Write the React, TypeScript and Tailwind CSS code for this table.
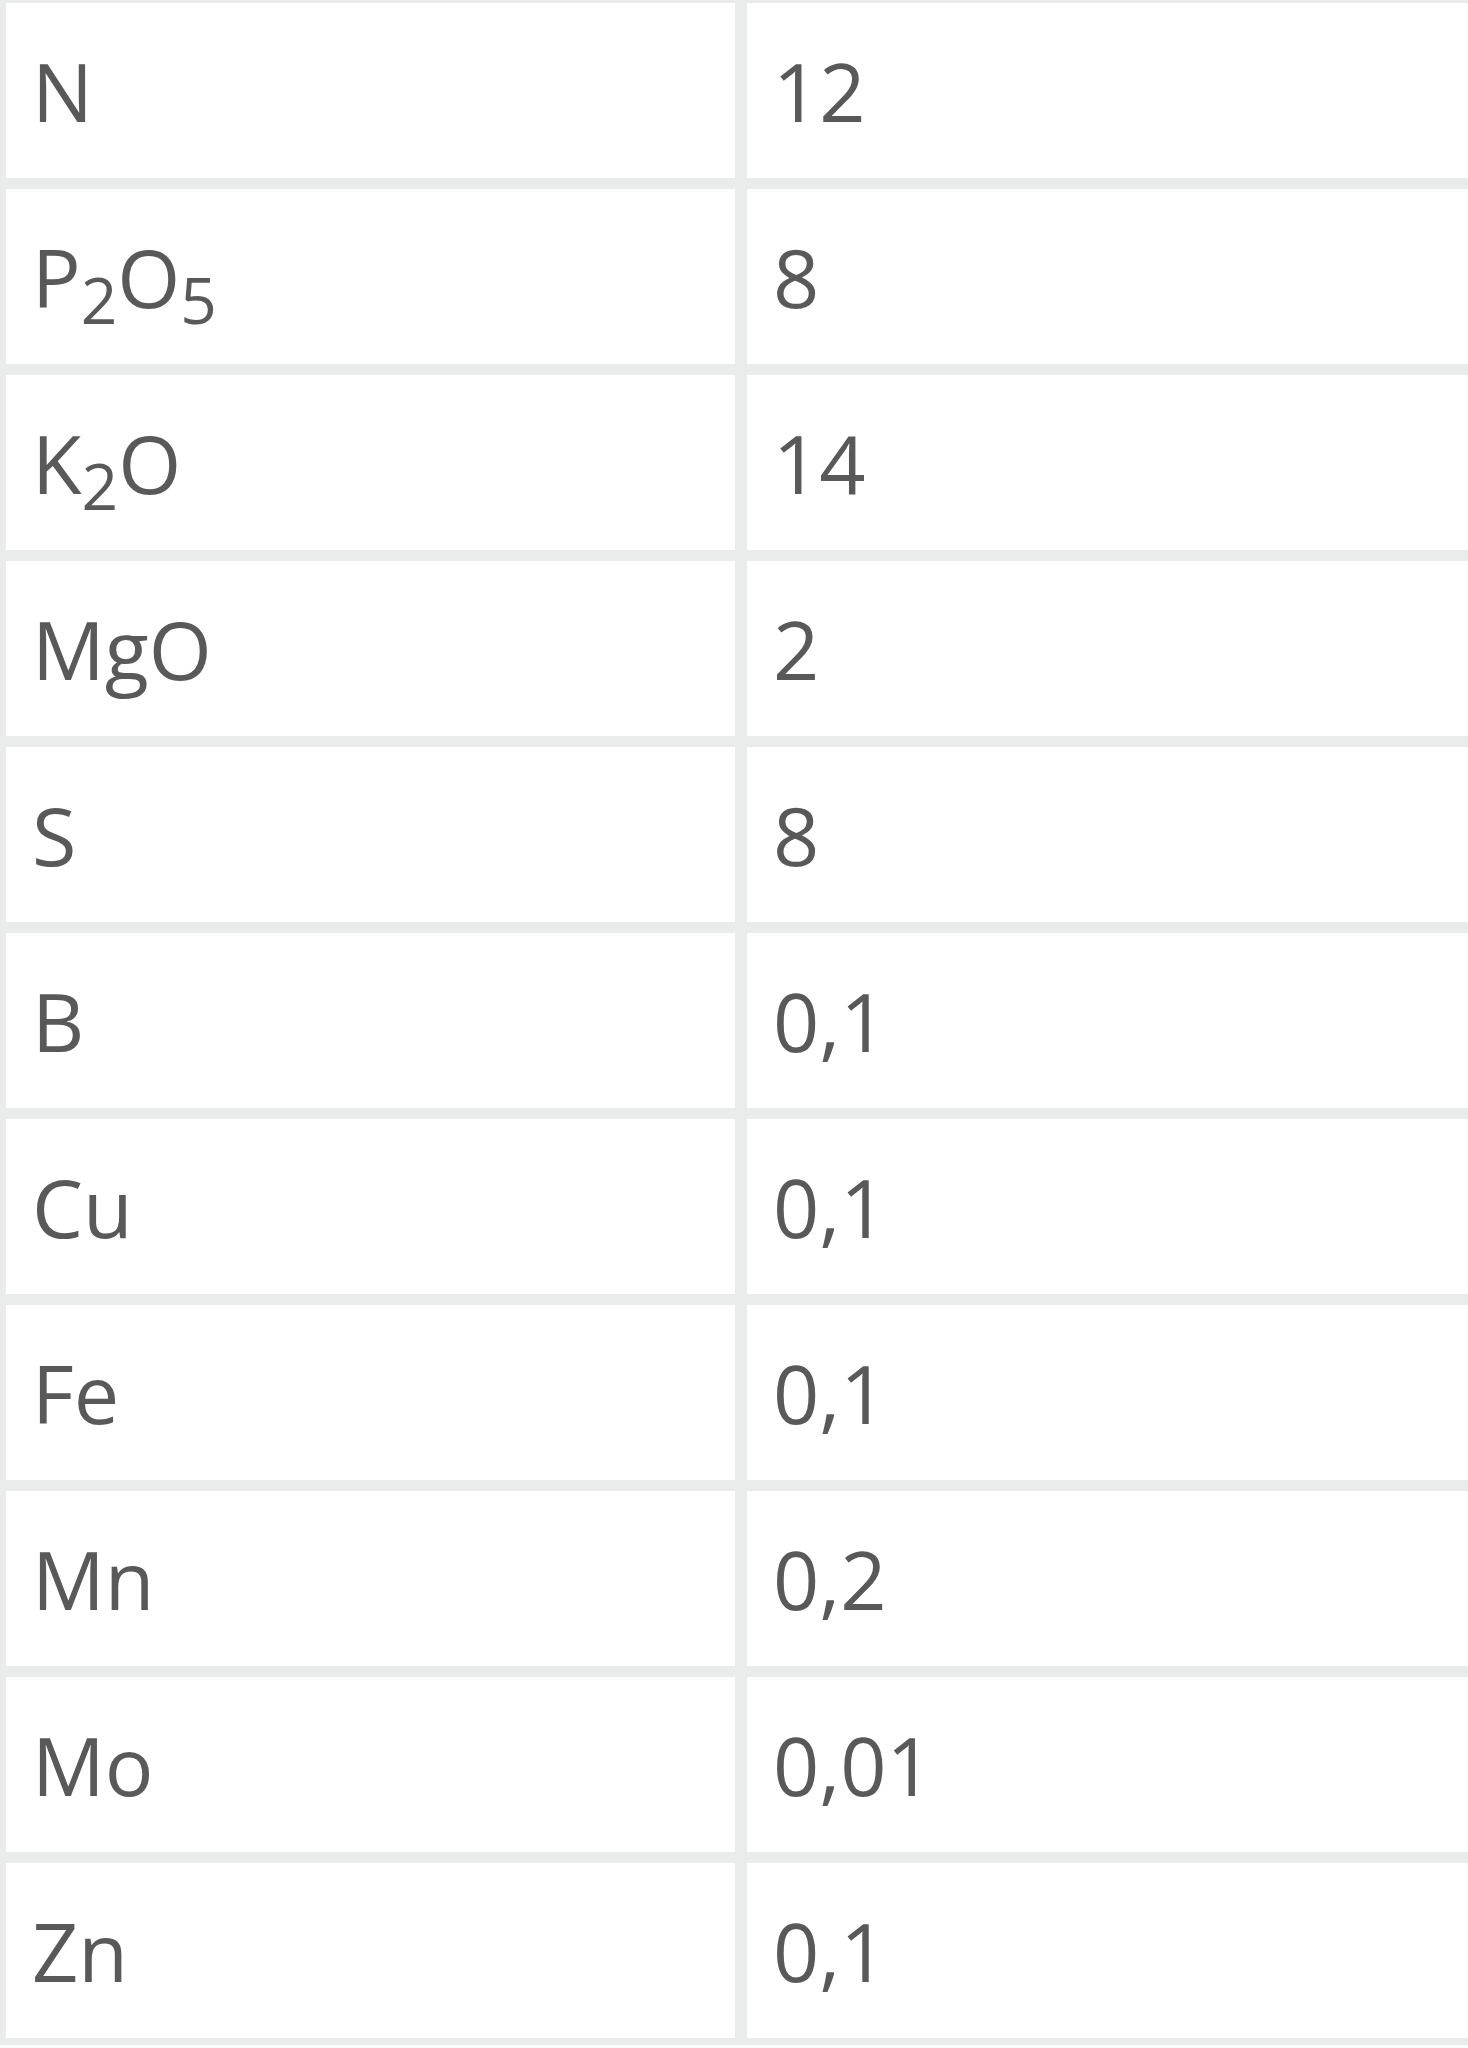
import React from 'react';

type Row = { name: React.ReactNode; value: string };

const Sub = ({ children }: { children: React.ReactNode }) => (
  <sub className="text-[79%]">{children}</sub>
);

const rows: Row[] = [
  { name: 'N', value: '12' },
  { name: <>P<Sub>2</Sub>O<Sub>5</Sub></>, value: '8' },
  { name: <>K<Sub>2</Sub>O</>, value: '14' },
  { name: 'MgO', value: '2' },
  { name: 'S', value: '8' },
  { name: 'B', value: '0,1' },
  { name: 'Cu', value: '0,1' },
  { name: 'Fe', value: '0,1' },
  { name: 'Mn', value: '0,2' },
  { name: 'Mo', value: '0,01' },
  { name: 'Zn', value: '0,1' },
];

export default function App() {
  return (
    <div className="w-[1468px] h-[2048px] overflow-hidden bg-white">
      <div
        className="flex flex-col gap-[11px] bg-[#eaeceb] pt-[3px] pl-[6px] pb-[7px] w-[1500px] text-[#595959] text-[81px] leading-none"
        style={{ fontFamily: '"Open Sans", sans-serif' }}
      >
        {rows.map((row, i) => (
          <div key={i} className="flex gap-[12px] h-[175px]">
            <div className="w-[729px] bg-white flex items-center pl-[26px]">
              <span>{row.name}</span>
            </div>
            <div className="flex-1 bg-white flex items-center pl-[26px]">
              <span>{row.value}</span>
            </div>
          </div>
        ))}
      </div>
    </div>
  );
}
